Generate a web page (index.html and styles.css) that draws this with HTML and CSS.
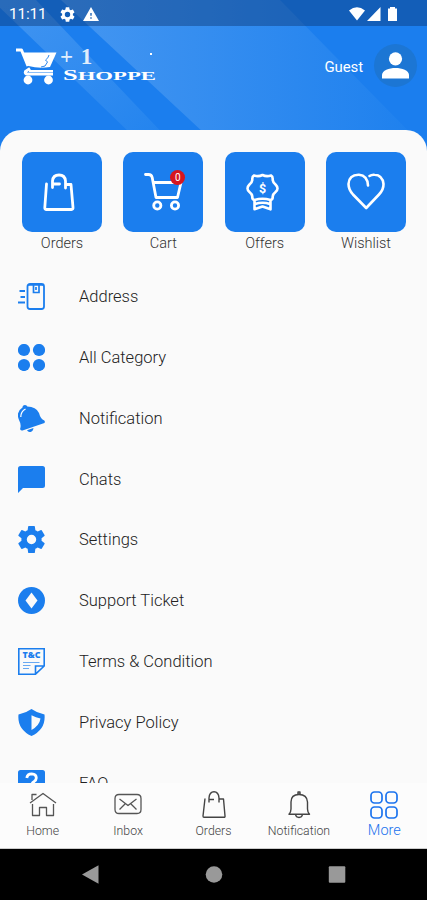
FILE: index.html
```html
<!DOCTYPE html>
<html lang="en">
<head>
	<meta charset="utf-8">
	<title>+1 Shoppe</title>
	<link rel="stylesheet" href="styles.css">
</head>
<body>
	<div id="app">
		<header class="header">
			<svg class="header-bg" viewBox="0 0 427 160" preserveAspectRatio="none">
				<defs>
					<linearGradient id="glow" x1="0" y1="0" x2="1" y2="0">
						<stop offset="0" stop-color="#4496f1"/>
						<stop offset="1" stop-color="#1d80ee"/>
					</linearGradient>
					<linearGradient id="band" x1="0" y1="0" x2="1" y2="1">
						<stop offset="0" stop-color="#4295f1"/>
						<stop offset="1" stop-color="#1e81ee"/>
					</linearGradient>
				</defs>
				<rect width="427" height="160" fill="#1b7eee"/>
				<path d="M61 0H280L427 150V160H233Z" fill="url(#glow)"/>
				<path d="M-8 0H36L188 160H158Z" fill="url(#band)"/>
			</svg>
			<div class="status">
				<span class="time">11:11</span>
				<svg class="st-gear" viewBox="2 2 20 20"><path fill="#fff" d="M19.14 12.94c.04-.3.06-.61.06-.94s-.02-.64-.07-.94l2.03-1.58a.49.49 0 0 0 .12-.61l-1.92-3.32a.49.49 0 0 0-.59-.22l-2.39.96a7 7 0 0 0-1.62-.94l-.36-2.54a.48.48 0 0 0-.48-.41h-3.84a.47.47 0 0 0-.47.41l-.36 2.54c-.59.24-1.13.57-1.62.94l-2.39-.96a.48.48 0 0 0-.59.22L2.74 8.87a.47.47 0 0 0 .12.61l2.03 1.58a6 6 0 0 0 0 1.88l-2.03 1.58a.49.49 0 0 0-.12.61l1.92 3.32c.12.22.37.29.59.22l2.39-.96c.5.38 1.03.7 1.62.94l.36 2.54c.05.24.24.41.48.41h3.84c.24 0 .44-.17.47-.41l.36-2.54a6.8 6.8 0 0 0 1.62-.94l2.39.96c.22.08.47 0 .59-.22l1.92-3.32a.47.47 0 0 0-.12-.61zM12 15.6a3.6 3.6 0 1 1 0-7.2 3.600 3.600 0 0 1 0 7.200z"/></svg>
				<svg class="st-warn" viewBox="1 2 22 19"><path fill="#fff" fill-rule="evenodd" d="M1 21h22L12 2zm12-3h-2v-2h2zm0-4h-2v-4h2z"/></svg>
				<svg class="st-right" viewBox="0 0 50 16">
					<path fill="#fff" d="M0 4.500Q8 -2 16 4.500L8 14.500ZM18 15H31.500V1ZM39 2.500h2V1h5v1.500h2V15h-9z"/>
				</svg>
			</div>
			<div class="topbar">
				<div class="logo">
					<svg class="logo-cart" viewBox="0 0 41 37">
						<path fill="#fff" d="M6.500 4.500H40.500L34 19Q23 21 12.500 18Z"/>
						<path fill="none" stroke="#fff" stroke-width="3" stroke-linejoin="round" d="M0 2H5.500L12 18M14 20.500L9.500 23.500Q8.500 26 11.500 26H37"/>
						<path fill="none" stroke="#fff" stroke-width="2" d="M13 23H37"/>
						<path fill="none" stroke="#2b86ec" stroke-width="1" d="M33 7Q32.500 10 29.500 12L31.500 14L29 18L25 19"/>
						<circle cx="12" cy="32" r="4.400" fill="#fff"/>
						<circle cx="32.500" cy="32" r="4.400" fill="#fff"/>
					</svg>
					<div class="logo-text">
						<div class="plus">+ 1</div>
						<svg class="shoppe" viewBox="0 0 95 13"><text x="0" y="11.500" textLength="93" lengthAdjust="spacingAndGlyphs"><tspan font-size="14.500">S</tspan>HOPPE</text></svg>
					</div>
				</div>
				<i class="speck"></i>
				<span class="guest">Guest</span>
				<div class="avatar">
					<svg viewBox="0 0 27 27"><circle cx="13.500" cy="6.800" r="6.600" fill="#fff"/><path fill="#fff" d="M0 26.500V23C0 18.500 7 16 13.500 16S27 18.500 27 23V26.500Z"/></svg>
				</div>
			</div>
		</header>

		<main class="sheet">
			<div class="tiles">
				<div class="tile">
					<div class="box"><svg viewBox="0 0 80 80"><g fill="none" stroke="#fff" stroke-width="2.800" stroke-linecap="round" stroke-linejoin="round"><path d="M24.500 32L22.800 55.500Q22.700 57.500 24.500 57.500H49.500Q51.200 57.500 51 55.500L49 32.500H43.500M30.500 35.500V29Q31 23 37 23T43.500 29V36M31 32H37.500"/></g></svg></div>
					<span>Orders</span>
				</div>
				<div class="tile">
					<div class="box"><svg viewBox="0 0 80 80"><g fill="none" stroke="#fff" stroke-width="2.800" stroke-linecap="round" stroke-linejoin="round"><path d="M22.500 22.500H25.500Q28.500 22.500 29.200 25.500L33 45.500H54.500L58 30.500H31"/><circle cx="34.300" cy="53.500" r="3.600"/><circle cx="52" cy="53.500" r="3.600"/></g></svg><b class="badge">0</b></div>
					<span>Cart</span>
				</div>
				<div class="tile">
					<div class="box"><svg viewBox="0 0 80 80"><g fill="none" stroke="#fff" stroke-width="2.600" stroke-linejoin="round"><path d="M29 23.500Q33.500 25 37.500 23Q41.500 25 46 23.500Q48 24.500 47.700 28Q48 30.500 50.500 32.500Q54.500 36.500 50.500 40Q48 42 47.700 44.500Q48 47.500 45.500 48Q37.500 45.500 29.500 48Q27 47.500 27.300 44.500Q27 42 24.500 40Q20.500 36.500 24.500 32.500Q27 30.500 27.300 28Q27 24.500 29 23.500Z"/><path d="M29.500 48V57.300L37.500 54.500L45.500 57.300V48M30 52Q37.500 49.500 45 52"/></g><text x="37.500" y="40.500" class="dollar">$</text></svg></div>
					<span>Offers</span>
				</div>
				<div class="tile">
					<div class="box"><svg viewBox="0 0 80 80"><path fill="none" stroke="#fff" stroke-width="2.600" stroke-linecap="round" stroke-linejoin="round" d="M42 33.500Q41.500 23.500 33 22.700Q23 22.500 22.500 32Q22.500 37.500 27 42.500L40.200 56L53 42.500Q57.700 37.500 57.500 32Q56.500 23 48.500 22.700Q45.500 22.500 43.500 24"/></svg></div>
					<span>Wishlist</span>
				</div>
			</div>

			<ul class="menu">
				<li>
					<svg viewBox="0 0 27 27"><g fill="none" stroke="#1b7eee"><rect x="9.500" y="1" width="16.500" height="25" rx="2.500" stroke-width="1.800"/><path stroke-width="1.700" d="M10 2H26M15.500 2V9.500H21V2M18 4V7"/><path stroke-width="2" d="M1.500 8H7M2.500 14H7M0 19.500H7"/></g></svg>
					<span>Address</span>
				</li>
				<li>
					<svg viewBox="0 0 27 27"><g fill="#1b7eee"><circle cx="6" cy="6" r="6.100"/><circle cx="21" cy="6" r="6.100"/><circle cx="6" cy="21" r="6.100"/><circle cx="21" cy="21" r="6.100"/></g></svg>
					<span>All Category</span>
				</li>
				<li>
					<svg viewBox="0 0 27 27"><path fill="#1b7eee" d="M4.500 2.500Q4.500 0 7 0Q9 .3 9.300 1.500Q18 1.500 21 8Q22.500 14 26.300 15.500Q28 18 25 18.500L4.500 25.500Q1.800 26 2.200 23.500Q3.500 19.500 1 15Q-2.500 7 4.500 2.500ZM9 25.200L15.500 23Q15 26.500 12.500 27Q10 27.200 9 25.200Z"/><path fill="none" stroke="#fff" stroke-width="1.300" d="M7.500 4Q2.800 6.500 2.800 12"/></svg>
					<span>Notification</span>
				</li>
				<li>
					<svg viewBox="0 0 27 27"><path fill="#1b7eee" d="M2.500 0H24.500Q27 0 27 2.500V19.500Q27 22 24.500 22H5L0 27V2.500Q0 0 2.500 0Z"/></svg>
					<span>Chats</span>
				</li>
				<li>
					<svg viewBox="2.200 2 19.600 20"><path fill="#1b7eee" d="M19.430 12.980c.04-.32.070-.64.070-.98s-.03-.66-.070-.98l2.110-1.650a.5.5 0 0 0 .120-.64l-2-3.460a.5.5 0 0 0-.610-.22l-2.490 1a7.300 7.300 0 0 0-1.690-.98l-.38-2.650A.49.490 0 0 0 14 2h-4a.49.490 0 0 0-.490.420l-.38 2.650c-.61.250-1.170.590-1.690.980l-2.490-1a.49.490 0 0 0-.610.220l-2 3.460a.49.490 0 0 0 .120.640l2.110 1.650a8 8 0 0 0 0 1.960l-2.110 1.650a.5.5 0 0 0-.120.640l2 3.460c.12.220.39.300.61.220l2.490-1c.52.400 1.080.730 1.690.980l.38 2.650c.03.240.24.420.49.420h4c.25 0 .46-.18.490-.42l.38-2.650a7.700 7.700 0 0 0 1.690-.98l2.490 1c.23.090.49 0 .61-.22l2-3.460a.5.5 0 0 0-.12-.64zM12 15.500a3.500 3.500 0 1 1 0-7 3.500 3.500 0 0 1 0 7z"/></svg>
					<span>Settings</span>
				</li>
				<li>
					<svg viewBox="0 0 27 27"><circle cx="13.500" cy="13.500" r="13.500" fill="#1b7eee"/><path fill="#fafafa" d="M13.500 5.500L19.500 13.500L13.500 21.500L7.500 13.500Z"/></svg>
					<span>Support Ticket</span>
				</li>
				<li>
					<svg viewBox="0 0 27 27"><path fill="none" stroke="#1b7eee" stroke-width="1.600" d="M26.200 18V.8H.8V26.200H17.500L26.200 18H17.500V26"/><path stroke="#1b7eee" stroke-opacity=".65" d="M5 14.500H21.500M5 17.500H12.500M5 20.500H11"/><text x="13.500" y="10" class="tc" textLength="18" lengthAdjust="spacingAndGlyphs">T&amp;C</text></svg>
					<span>Terms &amp; Condition</span>
				</li>
				<li>
					<svg viewBox="0 0 27 27"><path fill="#1b7eee" d="M13.500 0Q19 4 26.500 5.500Q28 20 13.500 27Q-1 20 .5 5.500Q8 4 13.500 0Z"/><path fill="#fafafa" d="M13.500 6.200Q18 8.500 22.500 9.500Q21.500 16.500 13.500 21Z"/></svg>
					<span>Privacy Policy</span>
				</li>
				<li>
					<svg viewBox="0 0 27 27"><path fill="#1b7eee" d="M2.500 0H24.500Q27 0 27 2.500V22H5L0 27V2.500Q0 0 2.500 0Z"/><path fill="none" stroke="#fff" stroke-width="2.800" d="M8.800 8Q9.300 3.800 13.700 3.800Q18.300 4 18.300 8Q18.300 10 16 11.700Q13.700 13 13.700 15.500"/></svg>
					<span>FAQ</span>
				</li>
			</ul>
		</main>

		<nav class="tabs">
			<div class="tab">
				<svg viewBox="0 0 28 28"><path fill="none" stroke="#555" stroke-width="1.300" stroke-linejoin="round" d="M1 12L14 2.500L27 12M3 9V3.500H7.500M3.500 13V24.500H10.500V16.500H17.500V24.500H24.500V13"/></svg>
				<span>Home</span>
			</div>
			<div class="tab">
				<svg viewBox="0 0 28 28"><path fill="none" stroke="#555" stroke-width="1.300" stroke-linejoin="round" d="M5 3.500H23Q27 3.500 27 7.500V18.500Q27 22.500 23 22.500H5Q1 22.500 1 18.500V7.500Q1 3.500 5 3.500ZM5.500 8L14 14.500L22.500 8M5.500 18.500L11 13M22.500 18.500L17 13"/></svg>
				<span>Inbox</span>
			</div>
			<div class="tab">
				<svg viewBox="0 0 28 28"><path fill="none" stroke="#444" stroke-width="1.400" stroke-linejoin="round" d="M5 7.500L3 25Q3 26.300 4 26.300H24Q25.200 26.300 25 25L23.500 8H19M9 11.500V7Q9.500 .8 14 .8T19 7V11.500M9.500 8.500H14"/></svg>
				<span>Orders</span>
			</div>
			<div class="tab">
				<svg viewBox="0 0 28 28"><path fill="none" stroke="#444" stroke-width="1.400" stroke-linejoin="round" d="M13 3.500V1H15V3.500M4 23.300H24.500Q22.500 21 22.500 18V11Q22 3.500 14 3.500T6 11V18Q6 21 4 23.300ZM10.500 23.500Q11 26.500 14 26.500T17.500 23.500"/></svg>
				<span>Notification</span>
			</div>
			<div class="tab active">
				<svg viewBox="0 0 28 28"><g fill="none" stroke="#1b73ee" stroke-width="1.700"><rect x="1" y="1" width="11" height="11" rx="3.500"/><rect x="16" y="1" width="11" height="11" rx="3.500"/><rect x="1" y="16" width="11" height="11" rx="3.500"/><rect x="16" y="16" width="11" height="11" rx="3.500"/></g></svg>
				<span>More</span>
			</div>
		</nav>

		<footer class="sysnav">
			<svg viewBox="0 0 18 20"><path fill="#999" d="M0 9.500L16.500 .3V18.700Z"/></svg>
			<svg viewBox="0 0 18 20"><circle cx="9" cy="9.500" r="8.300" fill="#999"/></svg>
			<svg viewBox="0 0 18 20"><rect x=".8" y="1.300" width="16.500" height="16.500" rx="1" fill="#999"/></svg>
		</footer>
	</div>
</body>
</html>
```

FILE: styles.css
```css
*{
	box-sizing: border-box;
}
body{
	margin: 0;
	background: #fafafa;
	font-family: Roboto, "Liberation Sans", sans-serif;
}
#app
{
	width: 427px;
	height: 900px;
	display: flex;
	flex-direction: column;
	overflow: hidden;
}

/* header */
.header
{
	position: relative;
	height: 160px;
	flex: none;
}
.header-bg
{
	position: absolute;
	left: 0;
	top: 0;
	width: 100%;
	height: 100%;
}
.status
{
	position: relative;
	height: 26px;
	padding: 2px 28px 0 9px;
	display: flex;
	align-items: center;
	background: rgba(10, 50, 110, .42);
	color: #fff;
}
.time
{
	width: 51px;
	font-size: 15.5px;
	letter-spacing: -.2px;
}
.st-gear
{
	width: 15px;
	height: 15px;
}
.st-warn
{
	width: 16px;
	height: 14px;
	margin-left: 8px;
}
.st-right
{
	width: 50px;
	height: 16px;
	margin-left: auto;
	margin-bottom: 1px;
}
.topbar
{
	position: relative;
	display: flex;
	align-items: center;
	height: 79px;
	padding: 0 10px 0 16px;
}
.logo
{
	display: flex;
}
.logo-cart
{
	width: 41px;
	height: 37px;
	margin-top: 2px;
}
.logo-text
{
	margin-left: 3px;
	color: #fff;
}
.plus
{
	height: 22px;
	line-height: 22px;
	font-family: "Liberation Serif", serif;
	font-weight: bold;
	font-size: 23px;
	word-spacing: 2px;
	opacity: .85;
}
.shoppe
{
	display: block;
	width: 95px;
	height: 13px;
	margin-left: 3px;
}
.shoppe text
{
	font-family: "Liberation Serif", serif;
	font-weight: bold;
	font-size: 12.5px;
	fill: #fff;
}
.speck
{
	position: absolute;
	left: 150px;
	top: 27px;
	width: 1.5px;
	height: 1.5px;
	background: #fff;
}
.guest
{
	margin-left: auto;
	margin-right: 11px;
	padding-top: 2px;
	color: #fff;
	font-size: 15px;
	letter-spacing: -.1px;
}
.avatar
{
	width: 43px;
	height: 43px;
	border-radius: 50%;
	background: #1c76d4;
	display: flex;
	align-items: center;
	justify-content: center;
}
.avatar svg
{
	width: 27px;
	height: 27px;
}

/* content */
.sheet
{
	position: relative;
	flex: 1;
	min-height: 0;
	margin-top: -30px;
	padding-top: 22px;
	overflow: hidden;
	background: #fafafa;
	border-radius: 21px 21px 0 0;
}
.tiles
{
	display: flex;
	justify-content: space-between;
	padding: 0 21px 0 22px;
}
.tile
{
	width: 80px;
	text-align: center;
	font-size: 14.5px;
	font-weight: 300;
	color: #333;
}
.tile span
{
	display: block;
	line-height: 18px;
	margin-top: 3px;
}
.box
{
	position: relative;
	width: 80px;
	height: 80px;
	border-radius: 10px;
	background: #1b7eee;
}
.box svg
{
	display: block;
	width: 80px;
	height: 80px;
}
.dollar
{
	font-weight: 700;
	font-size: 12.5px;
	text-anchor: middle;
	fill: #fff;
}
.badge
{
	position: absolute;
	left: 47px;
	top: 18px;
	width: 15px;
	height: 15px;
	border-radius: 50%;
	background: #d6161f;
	color: #fff;
	font-size: 10px;
	line-height: 15px;
}
.menu
{
	list-style: none;
	margin: 13.4px 0 0;
	padding: 0;
}
.menu li
{
	display: flex;
	align-items: center;
	height: 60.8px;
	padding-left: 18px;
}
.menu svg
{
	width: 27px;
	height: 27px;
	margin-right: 34px;
}
.menu span
{
	font-size: 16.5px;
	font-weight: 300;
	color: #222;
}
.tc
{
	font-family: "Open Sans", sans-serif;
	font-weight: 800;
	font-size: 8.5px;
	text-anchor: middle;
	fill: #1b7eee;
}

/* bottom tabs */
.tabs
{
	display: flex;
	height: 66px;
	flex: none;
	background: #fcfcfc;
	border-bottom: 1px solid #ccc;
}
.tab
{
	flex: 1;
	display: flex;
	flex-direction: column;
	align-items: center;
	padding-top: 8px;
	font-size: 12.3px;
	font-weight: 300;
	color: #444;
}
.tab svg
{
	width: 28px;
	height: 28px;
}
.tab span
{
	margin-top: 5px;
	line-height: 15px;
}
.active
{
	color: #1b73ee;
	font-size: 14.5px;
}
.active span
{
	margin-top: 4px;
}
.sysnav
{
	display: flex;
	flex: none;
	height: 51px;
	justify-content: center;
	align-items: center;
	gap: 105px;
	background: #000;
}
.sysnav svg
{
	width: 18px;
	height: 20px;
}
```
